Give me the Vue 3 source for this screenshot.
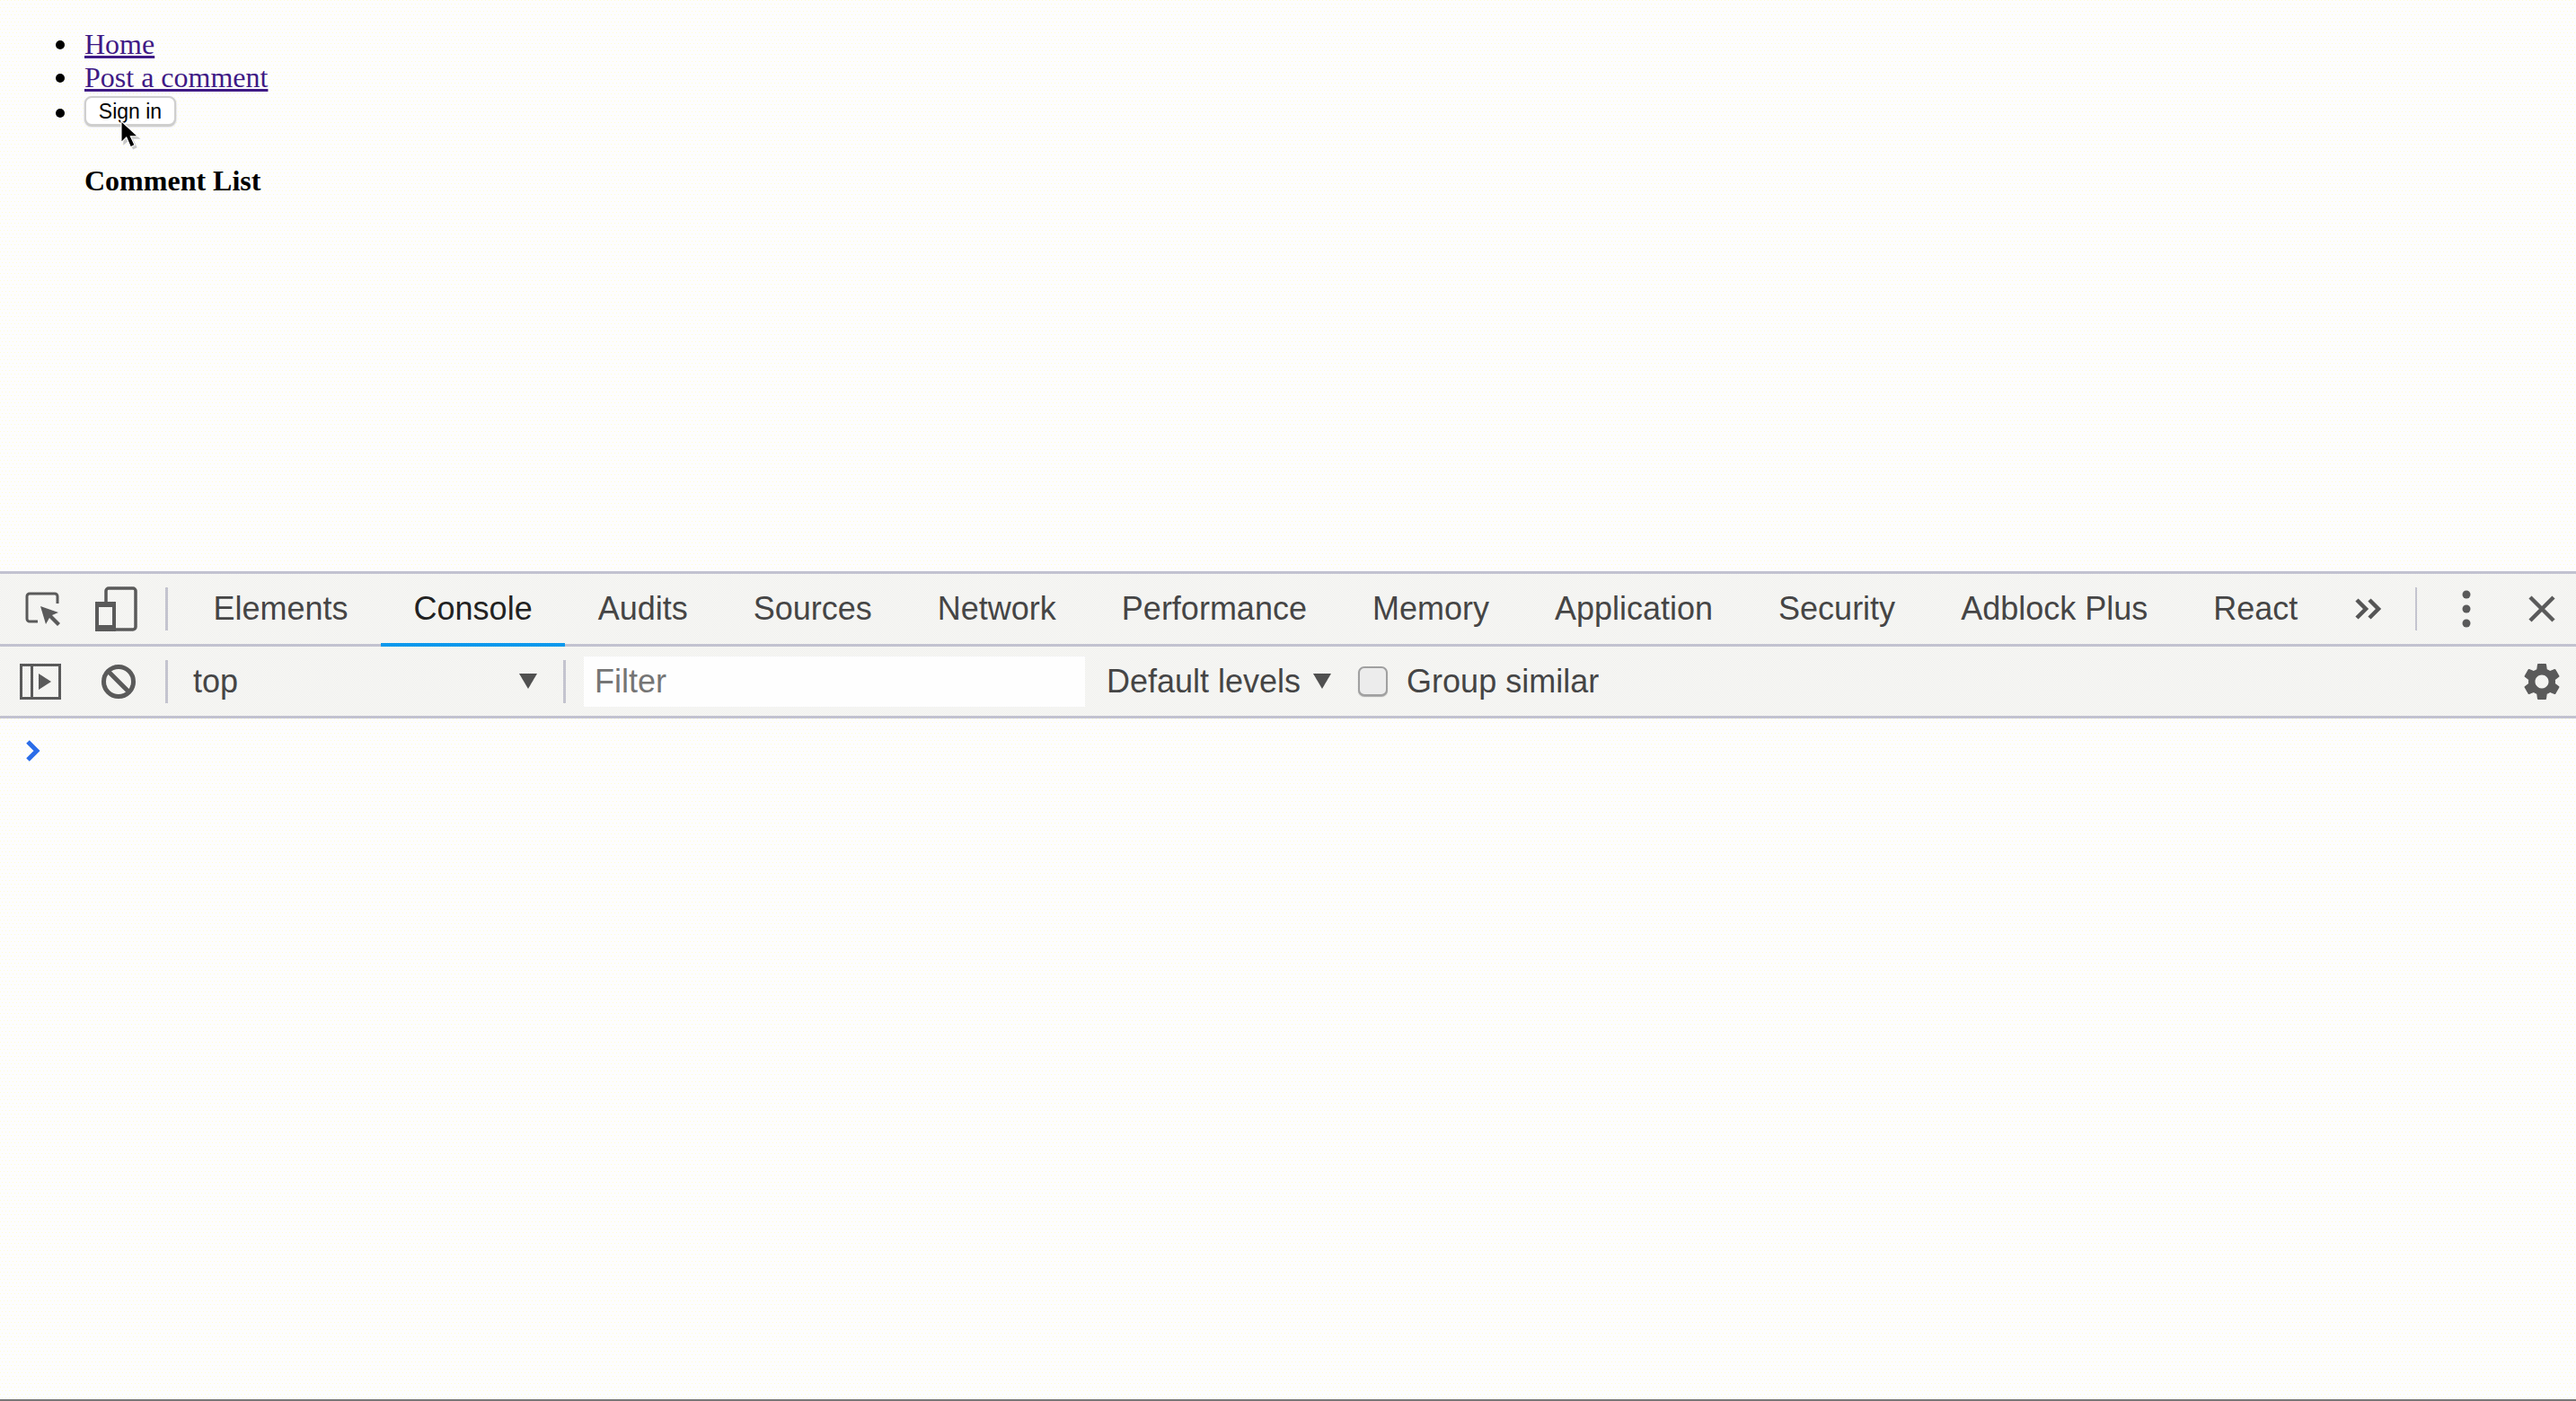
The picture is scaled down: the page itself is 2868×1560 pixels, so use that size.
<script setup>
const tabs = ['Elements', 'Console', 'Audits', 'Sources', 'Network', 'Performance', 'Memory', 'Application', 'Security', 'Adblock Plus', 'React']
const activeTab = 'Console'
</script>

<template>
  <div class="screen">
    <div class="page">
      <ul class="nav">
        <li><a href="#">Home</a></li>
        <li><a href="#">Post a comment</a></li>
        <li><button class="signin">Sign in</button></li>
      </ul>
      <h4 class="title">Comment List</h4>
      <svg class="cursor" width="24" height="34" viewBox="0 0 30 44">
        <path d="M5 6v30l8-7 6 13 6-3-6-12h11z" fill="#9a9a9a" opacity=".55" />
        <path d="M2 1v31l7.500-7.500 6 14 6-3-6-12.500h10.500z" fill="#000" stroke="#fff" stroke-width="1.500" />
      </svg>
    </div>

    <div class="bar tabs-bar">
      <svg class="inspect" width="46" height="46" viewBox="0 0 46 46">
        <path d="M16 37H7a3 3 0 0 1-3-3V9a3 3 0 0 1 3-3h28a3 3 0 0 1 3 3v8" fill="none" stroke="#5a5a5a" stroke-width="3" />
        <path d="M19 20l20 7-7 3 9 9-3 3-9-9-4 7z" fill="#5a5a5a" />
      </svg>
      <svg class="device" width="50" height="50" viewBox="0 0 50 50">
        <path d="M15 17V5a3 3 0 0 1 3-3h27a3 3 0 0 1 3 3v40a3 3 0 0 1-3 3H24" fill="none" stroke="#5a5a5a" stroke-width="3.500" />
        <rect x="5" y="19" width="19" height="29" rx="2" fill="none" stroke="#5a5a5a" stroke-width="4" />
        <path d="M3 17h23v6H3zM3 43h23v7H3z" fill="#5a5a5a" />
      </svg>
      <span class="sep first-sep"></span>
      <div v-for="tab in tabs" :key="tab" class="tab" :class="{ active: tab === activeTab }">{{ tab }}</div>
      <div class="tail">
        <svg class="more" width="32" height="26" viewBox="0 0 32 26">
          <path d="M3 3l10 10L3 23M17 3l10 10-10 10" fill="none" stroke="#555" stroke-width="4.500" />
        </svg>
        <span class="sep thin"></span>
        <svg class="dots" width="10" height="42" viewBox="0 0 10 42">
          <circle cx="5" cy="5" r="4.500" fill="#5a5a5a" />
          <circle cx="5" cy="21" r="4.500" fill="#5a5a5a" />
          <circle cx="5" cy="37" r="4.500" fill="#5a5a5a" />
        </svg>
        <svg class="close" width="32" height="32" viewBox="0 0 32 32">
          <path d="M3 3l26 26M29 3L3 29" fill="none" stroke="#5a5a5a" stroke-width="4.500" />
        </svg>
      </div>
    </div>

    <div class="bar filter-bar">
      <svg class="panel" width="46" height="40" viewBox="0 0 46 40">
        <path d="M1.500 1.500h43v37h-43zM13.500 1.500v37" fill="none" stroke="#5a5a5a" stroke-width="3" />
        <path d="M21 11l14 9-14 9z" fill="#5a5a5a" />
      </svg>
      <svg class="block" width="40" height="40" viewBox="0 0 40 40">
        <circle cx="20" cy="20" r="16.500" fill="none" stroke="#5a5a5a" stroke-width="5" />
        <path d="M8 8l24 24" stroke="#5a5a5a" stroke-width="5" />
      </svg>
      <span class="sep second-sep"></span>
      <div class="context">
        <span>top</span>
        <span class="arrow"></span>
      </div>
      <span class="sep"></span>
      <input class="filter" type="text" placeholder="Filter" />
      <div class="levels">
        <span>Default levels</span>
        <span class="arrow"></span>
      </div>
      <input class="check" type="checkbox" />
      <span class="group">Group similar</span>
      <svg class="gear" width="50" height="50" viewBox="0 0 24 24">
        <path fill="#5a5a5a" d="M19.140 12.940c.04-.3.06-.61.06-.94 0-.32-.02-.64-.07-.94l2.030-1.580c.18-.14.23-.41.12-.61l-1.920-3.320c-.12-.22-.37-.29-.59-.22l-2.390.96c-.5-.38-1.030-.7-1.620-.94l-.36-2.540c-.04-.24-.24-.41-.48-.41h-3.840c-.24 0-.43.17-.47.41l-.36 2.540c-.59.24-1.130.57-1.620.94l-2.390-.96c-.22-.08-.47 0-.59.22L2.740 8.870c-.12.21-.08.47.12.61l2.030 1.580c-.05.3-.09.63-.09.94s.02.64.07.94l-2.030 1.580c-.18.14-.23.41-.12.61l1.920 3.320c.12.22.37.29.59.22l2.390-.96c.5.38 1.030.7 1.620.94l.36 2.540c.05.24.24.41.48.41h3.840c.24 0 .44-.17.47-.41l.36-2.540c.59-.24 1.130-.56 1.620-.94l2.390.96c.22.08.47 0 .59-.22l1.920-3.320c.12-.22.07-.47-.12-.61l-2.010-1.580zM12 15.600c-1.980 0-3.600-1.620-3.600-3.600s1.620-3.600 3.600-3.600 3.600 1.620 3.600 3.600-1.620 3.600-3.600 3.600z" />
      </svg>
    </div>

    <div class="console">
      <svg width="18" height="24" viewBox="0 0 18 24">
        <path d="M4 2l10 10L4 22" fill="none" stroke="#2b6de8" stroke-width="5" />
      </svg>
    </div>
  </div>
</template>

<style scoped>
.screen {
  width: 2868px;
  height: 1560px;
  display: flex;
  flex-direction: column;
  overflow: hidden;
  background-color: #fdfdff;
  background-image:
    radial-gradient(circle at 0.5px 0.5px, #fffdd0 0.6px, transparent 0.7px),
    radial-gradient(circle at 2.5px 4.5px, #fffdd0 0.6px, transparent 0.7px);
  background-size: 4px 8px;
}

.page {
  position: relative;
  height: 636px;
  padding-top: 31px;
  box-sizing: border-box;
  font-family: "Liberation Serif", serif;
  font-size: 32px;
  color: #000;
}

.nav {
  margin: 0;
  padding-left: 94px;
  list-style: none;
}

.nav li {
  position: relative;
  line-height: 36.500px;
}

/* the default marker sits too far right and too small */
.nav li::before {
  content: '';
  position: absolute;
  left: -32px;
  top: 14px;
  width: 10px;
  height: 10px;
  border-radius: 50%;
  background: #000;
}

.nav a {
  color: #3f1a85;
}

.signin {
  display: block;
  width: 102px;
  height: 33px;
  margin-top: 3px;
  padding: 0;
  border: 2px solid #cfcfcf;
  border-radius: 8px;
  background: #fff;
  box-shadow: 0 1px 2px #bbb;
  font-family: "Liberation Sans", sans-serif;
  font-size: 23px;
  line-height: 28px;
  color: #000;
}

.title {
  margin: 43px 0 0 94px;
  font-size: 32px;
  font-weight: bold;
}

.cursor {
  position: absolute;
  left: 133px;
  top: 134px;
}

.bar {
  display: flex;
  align-items: center;
  flex: none;
  box-sizing: border-box;
  border-bottom: 3px solid #c2c2d0;
  font-family: "Liberation Sans", sans-serif;
  font-size: 36px;
  color: #454545;
  background: repeating-conic-gradient(#e9e9f3 0 25%, #fffff0 0 50%) 0 0 / 2px 2px;
}

.tabs-bar {
  height: 84px;
  border-top: 3px solid #c2c2d0;
}

.filter-bar {
  height: 80px;
}

.inspect {
  margin-left: 26px;
}

.device {
  margin-left: 31px;
}

.sep {
  flex: none;
  width: 3px;
  height: 48px;
  background: #c4c4cf;
}

.first-sep {
  margin-left: 31px;
  margin-right: 14px;
}

.tab {
  align-self: stretch;
  display: flex;
  align-items: center;
  margin-bottom: -3px;
  padding: 0 36.500px;
  border-bottom: 4px solid transparent;
}

.tab.active {
  color: #222;
  border-bottom-color: #0b98ec;
}

.tail {
  display: flex;
  align-items: center;
  margin-left: auto;
  padding-right: 22px;
}

.more {
  margin-right: 36px;
}

.thin {
  width: 2px;
}

.dots {
  margin-left: 50px;
}

.close {
  margin-left: 63px;
}

.panel {
  margin-left: 22px;
}

.block {
  margin-left: 44px;
}

.second-sep {
  margin-left: 32px;
  margin-right: 28px;
}

.context {
  display: flex;
  align-items: center;
  justify-content: space-between;
  width: 383px;
  margin-right: 29px;
}

.arrow {
  width: 0;
  height: 0;
  border-left: 10px solid transparent;
  border-right: 10px solid transparent;
  border-top: 17px solid #505050;
}

.filter {
  box-sizing: border-box;
  width: 558px;
  height: 56px;
  margin-left: 20px;
  padding: 0 12px;
  border: 0;
  outline: 0;
  background: #fefefe;
  font-family: "Liberation Sans", sans-serif;
  font-size: 36px;
  color: #454545;
}

.filter::placeholder {
  color: #757575;
  opacity: 1;
}

.levels {
  display: flex;
  align-items: center;
  gap: 14px;
  margin-left: 24px;
}

.check {
  appearance: none;
  width: 33px;
  height: 33px;
  margin: 0 0 0 30px;
  border: 2px solid #a0a0a0;
  border-radius: 7px;
  background: #ececec;
  box-shadow: 0 1px 1px #aaa;
}

.group {
  margin-left: 21px;
}

.gear {
  margin-left: auto;
  margin-right: 13px;
}

.console {
  flex: 1;
  padding: 24px 0 0 27px;
  border-bottom: 2px solid #777;
}
</style>
